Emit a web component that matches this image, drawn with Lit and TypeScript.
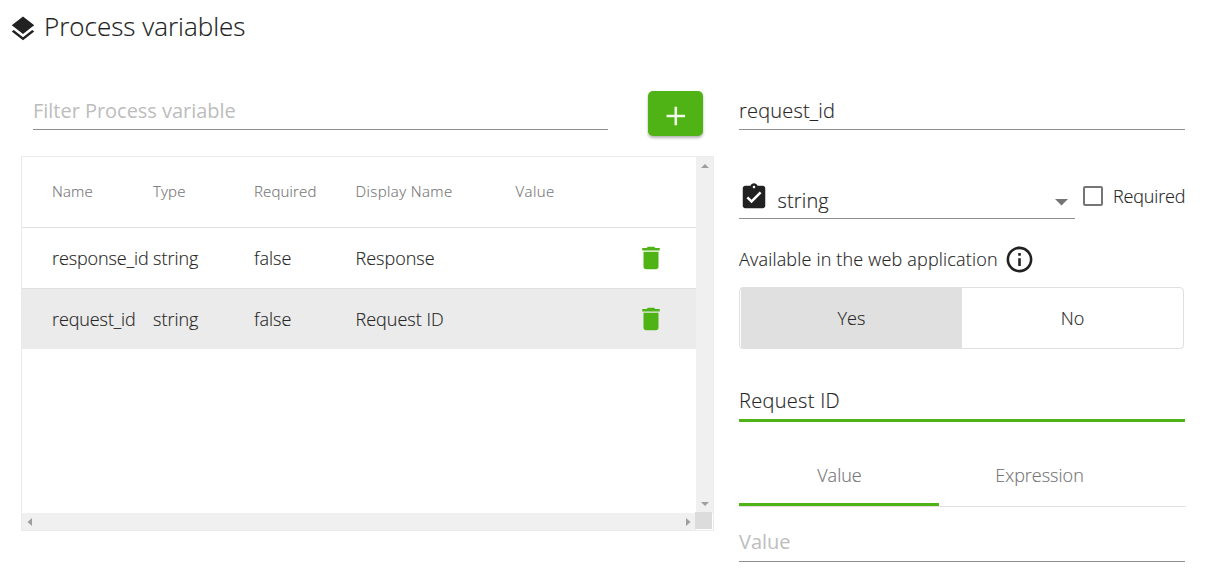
import { LitElement, html, css, svg, nothing } from "lit";
import { customElement, property, state } from "lit/decorators.js";
import { classMap } from "lit/directives/class-map.js";

interface ProcessVariable {
  name: string;
  type: string;
  required: boolean;
  displayName: string;
  value: string;
}

const ICONS = {
  layers: svg`<path d="M11.99 18.54l-7.37-5.73L3 14.07l9 7 9-7-1.63-1.27-7.38 5.74zM12 16l7.36-5.73L21 9l-9-7-9 7 1.63 1.27L12 16z"/>`,
  plus: svg`<path d="M18.8 12.9h-6v6h-1.9v-6h-6v-1.8h6v-6h1.9v6h6z"/>`,
  trash: svg`<path d="M6 19c0 1.1.9 2 2 2h8c1.1 0 2-.9 2-2V7H6v12zM19 4h-3.5l-1-1h-5l-1 1H5v2h14V4z"/>`,
  clipboard: svg`<path d="M19 3h-4.18C14.4 1.84 13.3 1 12 1c-1.3 0-2.4.84-2.82 2H5c-1.1 0-2 .9-2 2v14c0 1.1.9 2 2 2h14c1.1 0 2-.9 2-2V5c0-1.1-.9-2-2-2zm-7 0c.55 0 1 .45 1 1s-.45 1-1 1-1-.45-1-1 .45-1 1-1zm-2 14l-4-4 1.41-1.41L10 14.17l6.59-6.59L18 9l-8 8z"/>`,
  info: svg`<path d="M11 17h2v-6h-2v6zm1-15C6.48 2 2 6.48 2 12s4.48 10 10 10 10-4.48 10-10S17.52 2 12 2zm0 18c-4.41 0-8-3.59-8-8s3.59-8 8-8 8 3.59 8 8-3.59 8-8 8zM11 9h2V7h-2v2z"/>`,
};

@customElement("app-icon")
export class AppIcon extends LitElement {
  @property() name: keyof typeof ICONS = "layers";

  static styles = css`
    :host { display: block; flex: none; width: 30px; height: 30px; }
    svg { display: block; width: 100%; height: 100%; fill: currentColor; }
  `;

  render() {
    return html`<svg viewBox="0 0 24 24" aria-hidden="true">${ICONS[this.name]}</svg>`;
  }
}

@customElement("variable-table")
export class VariableTable extends LitElement {
  @property({ attribute: false }) variables: ProcessVariable[] = [];
  @property() selected = "";

  static styles = css`
    :host {
      display: grid;
      grid-template-columns: 674px 17px;
      grid-template-rows: 356px 17px;
      border: 1px solid #ebebeb;
      color: #262626;
    }
    .row {
      display: grid;
      grid-template-columns: 101px 101px 101.5px 160px 120.5px 30px;
      align-items: center;
      padding-left: 30px;
      height: 60px;
      font-size: 18px;
      white-space: nowrap;
      border-bottom: 1px solid #e0e0e0;
    }
    .name { letter-spacing: -0.1px; }
    .head {
      box-sizing: border-box;
      height: 71px;
      padding-bottom: 2px;
      font-size: 15px;
      color: #757575;
      letter-spacing: 0.15px;
    }
    .head .wide { letter-spacing: 0.4px; }
    .row:last-child { border-bottom: none; }
    .selected { background: #ebebeb; }
    .trash { color: #50b315; }
    .bar { display: flex; justify-content: space-between; align-items: center; background: #f0f0f0; }
    .vertical { flex-direction: column; padding: 7px 0; }
    .horizontal { padding: 0 5px; }
    .arrow { display: block; fill: #9e9e9e; }
    .corner { background: #dcdcdc; margin: -1px 1px 1px -1px; }
  `;

  render() {
    return html`
      <div class="body">
        <div class="row head">
          <span>Name</span><span>Type</span><span>Required</span>
          <span class="wide">Display Name</span><span class="wide">Value</span>
        </div>
        ${this.variables.map(
          (v) => html`
            <div class=${classMap({ row: true, selected: v.name === this.selected })}>
              <span class="name">${v.name}</span><span>${v.type}</span><span>${v.required}</span>
              <span>${v.displayName}</span><span>${v.value || nothing}</span>
              <app-icon class="trash" name="trash"></app-icon>
            </div>
          `
        )}
      </div>
      <div class="bar vertical">
        <svg class="arrow" width="8" height="4"><path d="M0 4L4 0L8 4z" /></svg>
        <svg class="arrow" width="8" height="4"><path d="M0 0L4 4L8 0z" /></svg>
      </div>
      <div class="bar horizontal">
        <svg class="arrow" width="5" height="8"><path d="M5 0L0.5 4L5 8z" /></svg>
        <svg class="arrow" width="5" height="8"><path d="M0 0L4.5 4L0 8z" /></svg>
      </div>
      <div class="corner"></div>
    `;
  }
}

@customElement("app-root")
export class AppRoot extends LitElement {
  @state() private variables: ProcessVariable[] = [
    { name: "response_id", type: "string", required: false, displayName: "Response", value: "" },
    { name: "request_id", type: "string", required: false, displayName: "Request ID", value: "" },
  ];

  static styles = css`
    :host {
      display: block;
      box-sizing: border-box;
      height: 583px;
      overflow: hidden;
      background: #fff;
      color: #262626;
      font-family: "Open Sans", "Noto Sans", sans-serif;
      font-weight: 300;
      font-size: 18px;
      -webkit-text-stroke: 0.15px currentColor;
    }
    .title {
      display: flex;
      align-items: center;
      gap: 6px;
      height: 30px;
      padding: 14px 0 0 8px;
      color: #212121;
    }
    .heading { margin: -6px 0 0; font-size: 26px; font-weight: 300; line-height: 30px; }
    .columns { display: flex; gap: 25px; padding: 47px 0 0 21px; }
    .left { width: 693px; }
    .right { width: 447px; }
    .toolbar { display: flex; align-items: flex-start; gap: 40px; padding: 0 0 20px 12px; }
    .field {
      box-sizing: border-box;
      width: 446px;
      height: 39px;
      border-bottom: 1px solid #8f8f8f;
      font-size: 20px;
      line-height: 40px;
      letter-spacing: 0.2px;
    }
    .filter { width: 575px; }
    .placeholder { color: #bdbdbd; font-weight: 400; letter-spacing: -0.03px; -webkit-text-stroke: 0; }
    .add {
      display: flex;
      align-items: center;
      justify-content: center;
      width: 55px;
      height: 45px;
      padding: 5px 0 0;
      box-sizing: border-box;
      border: none;
      border-radius: 5px;
      background: #50b315;
      color: #f1faeb;
      box-shadow: 0 2px 3px rgba(0, 0, 0, 0.3);
    }
    .plus { width: 32px; height: 32px; }
    .type-row { display: flex; align-items: flex-start; margin-top: 51px; }
    .select {
      box-sizing: border-box;
      display: flex;
      align-items: flex-start;
      width: 336px;
      height: 38px;
      border-bottom: 1px solid #8f8f8f;
      font-size: 20px;
      line-height: 39px;
      letter-spacing: 0.15px;
    }
    .clip { color: #212121; margin: 1px 8.5px 0 0; }
    .caret { margin: 18px 7px 0 auto; fill: #757575; }
    .check { display: flex; align-items: center; gap: 10px; height: 22px; margin: 4px 0 0 8px; line-height: 22px; letter-spacing: -0.15px; }
    .box { box-sizing: border-box; width: 20px; height: 20px; border: 2px solid #757575; border-radius: 2px; }
    .available { display: flex; align-items: center; gap: 6px; height: 32px; margin-top: 24px; letter-spacing: 0.18px; }
    .info { width: 31px; height: 31px; color: #212121; }
    .toggle {
      box-sizing: border-box;
      display: flex;
      width: 445px;
      height: 62px;
      margin-top: 12px;
      padding-left: 1px;
      border: 1px solid #e0e0e0;
      border-radius: 4px;
      line-height: 60px;
      text-align: center;
    }
    .option { flex: 1; }
    .on { background: #e0e0e0; }
    .display-name { height: 41px; margin-top: 32px; border-bottom: 3px solid #50b315; letter-spacing: 0.3px; }
    .tabs { display: flex; height: 60px; margin-top: 24px; border-bottom: 1px solid #e0e0e0; line-height: 59px; color: #757575; text-align: center; }
    .tab { box-sizing: border-box; width: 200px; height: 60px; padding-left: 1px; }
    .active { border-bottom: 3px solid #50b315; }
    .value { margin-top: 16px; line-height: 38px; }
  `;

  render() {
    return html`
      <header class="title">
        <app-icon name="layers"></app-icon>
        <h1 class="heading">Process variables</h1>
      </header>
      <main class="columns">
        <section class="left">
          <div class="toolbar">
            <div class="field filter placeholder">Filter Process variable</div>
            <button class="add" aria-label="Add"><app-icon class="plus" name="plus"></app-icon></button>
          </div>
          <variable-table .variables=${this.variables} selected="request_id"></variable-table>
        </section>
        <section class="right">
          <div class="field">request_id</div>
          <div class="type-row">
            <div class="select">
              <app-icon class="clip" name="clipboard"></app-icon>
              <span>string</span>
              <svg class="caret" width="13" height="7"><path d="M0 0h13L6.5 6.5z" /></svg>
            </div>
            <label class="check"><span class="box"></span>Required</label>
          </div>
          <div class="available">
            <span>Available in the web application</span>
            <app-icon class="info" name="info"></app-icon>
          </div>
          <div class="toggle">
            <div class="option on">Yes</div>
            <div class="option">No</div>
          </div>
          <div class="field display-name">Request ID</div>
          <nav class="tabs">
            <div class="tab active">Value</div>
            <div class="tab">Expression</div>
          </nav>
          <div class="field placeholder value">Value</div>
        </section>
      </main>
    `;
  }
}
